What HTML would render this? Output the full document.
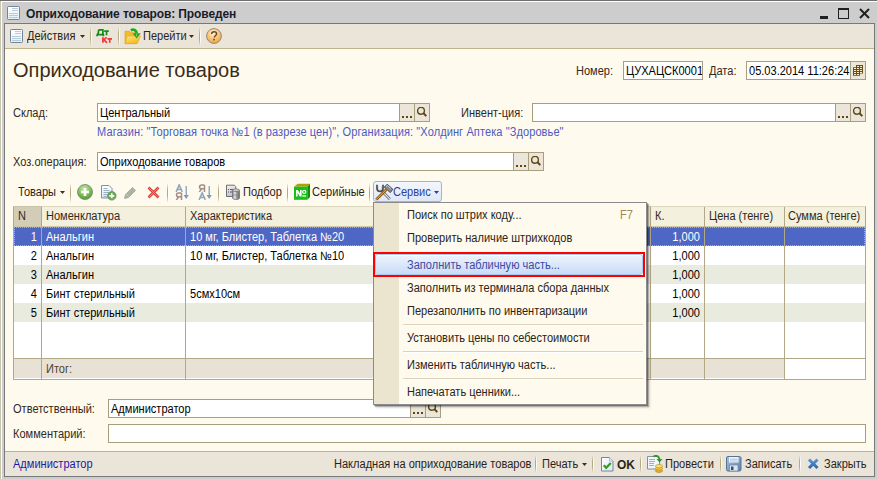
<!DOCTYPE html>
<html><head><meta charset="utf-8">
<style>
*{margin:0;padding:0;box-sizing:border-box}
html,body{width:877px;height:479px;overflow:hidden;background:#cdcdcd;font-family:"Liberation Sans",sans-serif;font-size:11px;color:#000}
.a{position:absolute}
.t{position:absolute;white-space:nowrap;line-height:13px}
</style></head><body>
<div class="a" style="left:0px;top:0px;width:877px;height:1px;background:#6f6f6f;"></div>
<div class="a" style="left:0px;top:1px;width:877px;height:1px;background:#ffffff;"></div>
<div class="a" style="left:0px;top:1px;width:1px;height:478px;background:#c9c5aa;"></div>
<div class="a" style="left:1px;top:1px;width:1px;height:478px;background:#ffffff;"></div>
<svg class="a" style="left:7px;top:6px" width="14" height="15" viewBox="0 0 14 15">
<defs><linearGradient id="di1" x1="0" y1="0" x2="0" y2="1"><stop offset="0" stop-color="#ffffff"/><stop offset="1" stop-color="#e6eef6"/></linearGradient></defs>
<rect x="0.5" y="0.5" width="12" height="13" rx="0.8" fill="url(#di1)" stroke="#718699"/>
<path d="M5 2.5h6M5 4.5h6M2 7.5h9M2 9.5h9M2 11.5h9" stroke="#b9cad8" stroke-width="1"/>
</svg>
<div class="t" style="left:26px;top:8px;font-size:12px;color:#1b1b28;font-weight:bold;letter-spacing:-0.1px;">Оприходование товаров: Проведен</div>
<div class="a" style="left:820px;top:16px;width:8px;height:3px;background:#202020;"></div>
<div class="a" style="left:838px;top:8px;width:11px;height:11px;border:1px solid #202020;border-top-width:2px;"></div>
<svg class="a" style="left:859px;top:8px" width="11" height="11" viewBox="0 0 11 11"><path d="M1 1L10 10M10 1L1 10" stroke="#202020" stroke-width="2"/></svg>
<div class="a" style="left:4px;top:23px;width:871px;height:454px;background:#fffaee;border:1px solid #787878;"></div>
<div class="a" style="left:5px;top:24px;width:869px;height:24px;background:#ebe4d8;"></div>
<div class="a" style="left:5px;top:48px;width:869px;height:1px;background:#bdb28e;"></div>
<svg class="a" style="left:10px;top:29px" width="14" height="15" viewBox="0 0 14 15">
<defs><linearGradient id="di2" x1="0" y1="0" x2="0" y2="1"><stop offset="0" stop-color="#ffffff"/><stop offset="1" stop-color="#e6eef6"/></linearGradient></defs>
<rect x="0.5" y="0.5" width="12" height="13" rx="0.8" fill="url(#di2)" stroke="#718699"/>
<path d="M5 2.5h6M5 4.5h6M2 7.5h9M2 9.5h9M2 11.5h9" stroke="#b9cad8" stroke-width="1"/>
</svg>
<div class="t" style="left:27px;top:30px;font-size:12px;transform:scaleX(0.92);transform-origin:0 0;color:#2a2418;">Действия</div>
<svg class="a" style="left:80px;top:35px" width="6" height="4"><path d="M0 0h5L2.5 3z" fill="#3a3020"/></svg>
<div class="a" style="left:90px;top:27px;width:1px;height:19px;background:linear-gradient(rgba(180,170,125,0),rgba(180,170,125,1) 35%,rgba(180,170,125,1) 65%,rgba(180,170,125,0));"></div>
<div class="a" style="left:91px;top:27px;width:1px;height:19px;background:linear-gradient(rgba(255,255,255,0),rgba(255,255,255,0.9) 35%,rgba(255,255,255,0.9) 65%,rgba(255,255,255,0));"></div>
<svg class="a" style="left:95px;top:27px" width="18" height="17" viewBox="0 0 18 17">
<g fill="none" stroke="#178a1a" stroke-width="1.7">
<path d="M3.6 2.8h4.3V7.6M3.6 2.8C3.6 5.5 3.2 6.8 2.6 7.6M1.8 7.6h7.2M2.1 7.2V9.2M8.4 7.2V9.2"/>
<path d="M9.2 4.2h4.6M11.5 4.2V8.2"/>
</g>
<g fill="none" stroke="#f03a3a" stroke-width="1.7">
<path d="M7.9 10.3V15.8M8.4 13.1L11.6 10.3M8.9 12.6L11.9 15.8"/>
<path d="M12.4 11.8h4.6M14.7 11.8V15.8"/>
</g>
</svg>
<div class="a" style="left:118px;top:27px;width:1px;height:19px;background:linear-gradient(rgba(180,170,125,0),rgba(180,170,125,1) 35%,rgba(180,170,125,1) 65%,rgba(180,170,125,0));"></div>
<div class="a" style="left:119px;top:27px;width:1px;height:19px;background:linear-gradient(rgba(255,255,255,0),rgba(255,255,255,0.9) 35%,rgba(255,255,255,0.9) 65%,rgba(255,255,255,0));"></div>
<svg class="a" style="left:124px;top:28px" width="18" height="17" viewBox="0 0 18 17">
<defs><linearGradient id="fy" x1="0" y1="0" x2="0.6" y2="1"><stop offset="0" stop-color="#fde68a"/><stop offset="1" stop-color="#f3b81e"/></linearGradient></defs>
<path d="M1 3.2H5.5L7 4.8H12V15.6H1z" fill="#f0bc2a" stroke="#e0a418" stroke-width="0.7"/>
<path d="M1.3 15.6L3 8H16.5L13.2 15.6z" fill="url(#fy)" stroke="#e6ac20" stroke-width="0.7"/>
<path d="M6.8 2.3C9.5 0.9 12.3 1.8 12.8 5.6" fill="none" stroke="#1ea81e" stroke-width="2.6"/>
<path d="M8.6 5.2H16.8L12.7 10.6z" fill="#1ea81e"/>
<path d="M12.7 5.5V8.5" stroke="#7fe07f" stroke-width="0.9"/>
</svg>
<div class="t" style="left:143px;top:30px;font-size:12px;transform:scaleX(0.92);transform-origin:0 0;color:#2a2418;">Перейти</div>
<svg class="a" style="left:189px;top:35px" width="6" height="4"><path d="M0 0h5L2.5 3z" fill="#3a3020"/></svg>
<div class="a" style="left:199px;top:27px;width:1px;height:19px;background:linear-gradient(rgba(180,170,125,0),rgba(180,170,125,1) 35%,rgba(180,170,125,1) 65%,rgba(180,170,125,0));"></div>
<div class="a" style="left:200px;top:27px;width:1px;height:19px;background:linear-gradient(rgba(255,255,255,0),rgba(255,255,255,0.9) 35%,rgba(255,255,255,0.9) 65%,rgba(255,255,255,0));"></div>
<svg class="a" style="left:206px;top:28px" width="17" height="17" viewBox="0 0 17 17">
<defs><radialGradient id="hg" cx="0.45" cy="0.3" r="0.75"><stop offset="0" stop-color="#fff3dc"/><stop offset="0.5" stop-color="#f9c77a"/><stop offset="1" stop-color="#f0a03c"/></radialGradient></defs>
<circle cx="8" cy="8" r="7.4" fill="url(#hg)" stroke="#8f8070" stroke-width="0.9"/>
<path d="M5.6 6.1c0-1.6 1.1-2.4 2.5-2.4s2.5.8 2.5 2.2c0 1.6-2.2 1.7-2.2 3.6" fill="none" stroke="#6b4a28" stroke-width="1.5"/>
<rect x="7.2" y="10.8" width="1.6" height="1.6" fill="#6b4a28"/>
</svg>
<div class="t" style="left:13px;top:64px;font-size:20px;color:#3a2c18;">Оприходование товаров</div>
<div class="t" style="left:576px;top:65px;font-size:12px;transform:scaleX(0.92);transform-origin:0 0;color:#33291a;">Номер:</div>
<div class="a" style="left:623px;top:61px;width:80px;height:19px;background:#fff;border:1px solid #a89d7c;overflow:hidden"><div class="t" style="left:2px;top:3px;color:#000;font-size:12px;transform:scaleX(0.92);transform-origin:0 0">ЦУХАЦСК0001</div></div>
<div class="t" style="left:709px;top:65px;font-size:12px;transform:scaleX(0.92);transform-origin:0 0;color:#33291a;">Дата:</div>
<div class="a" style="left:746px;top:61px;width:120px;height:19px;background:#fff;border:1px solid #a89d7c;"></div>
<div class="a" style="left:850px;top:61px;width:16px;height:19px;background:#ebe6d9;border:1px solid #a89d7c;"></div>
<div class="t" style="left:749px;top:65px;font-size:12px;transform:scaleX(0.92);transform-origin:0 0;color:#000;">05.03.2014 11:26:24</div>
<svg class="a" style="left:852px;top:64px" width="13" height="13" viewBox="0 0 13 13">
<path d="M4 1H11V9.6H8V11.8H1V3.2H4z" fill="#6e4c0e"/>
<g fill="#f6eed6">
<rect x="5" y="2" width="2" height="1"/><rect x="8" y="2" width="2" height="1"/>
<rect x="2" y="4" width="2" height="1"/><rect x="5" y="4" width="2" height="1"/><rect x="8" y="4" width="2" height="1"/>
<rect x="2" y="6" width="2" height="1"/><rect x="5" y="6" width="2" height="1"/><rect x="8" y="6" width="2" height="1"/>
<rect x="2" y="8" width="2" height="1"/><rect x="5" y="8" width="2" height="1"/><rect x="8" y="8" width="2" height="1"/>
<rect x="2" y="10" width="2" height="1"/><rect x="5" y="10" width="2" height="1"/>
</g>
</svg>
<div class="t" style="left:13px;top:107px;font-size:12px;transform:scaleX(0.92);transform-origin:0 0;color:#33291a;">Склад:</div>
<div class="a" style="left:97px;top:103px;width:333px;height:19px;background:#fff;border:1px solid #a89d7c;"></div>
<div class="a" style="left:399px;top:103px;width:16px;height:19px;background:#ebe6d9;border:1px solid #a89d7c;"></div>
<div class="a" style="left:414px;top:103px;width:16px;height:19px;background:#ebe6d9;border:1px solid #a89d7c;"></div>
<div class="a" style="left:402px;top:116px;width:2px;height:2px;background:#5e4614;"></div>
<div class="a" style="left:406px;top:116px;width:2px;height:2px;background:#5e4614;"></div>
<div class="a" style="left:410px;top:116px;width:2px;height:2px;background:#5e4614;"></div>
<svg class="a" style="left:417px;top:107px" width="11" height="11" viewBox="0 0 11 11"><circle cx="4" cy="3.8" r="3.4" fill="none" stroke="#5e4614" stroke-width="1.4"/><path d="M6.5 6.3L9.3 9.1" stroke="#5e4614" stroke-width="2"/></svg>
<div class="t" style="left:100px;top:107px;font-size:12px;transform:scaleX(0.92);transform-origin:0 0;color:#000;">Центральный</div>
<div class="t" style="left:461px;top:107px;font-size:12px;transform:scaleX(0.92);transform-origin:0 0;color:#33291a;">Инвент-ция:</div>
<div class="a" style="left:532px;top:103px;width:334px;height:19px;background:#fff;border:1px solid #a89d7c;"></div>
<div class="a" style="left:835px;top:103px;width:16px;height:19px;background:#ebe6d9;border:1px solid #a89d7c;"></div>
<div class="a" style="left:850px;top:103px;width:16px;height:19px;background:#ebe6d9;border:1px solid #a89d7c;"></div>
<div class="a" style="left:838px;top:116px;width:2px;height:2px;background:#5e4614;"></div>
<div class="a" style="left:842px;top:116px;width:2px;height:2px;background:#5e4614;"></div>
<div class="a" style="left:846px;top:116px;width:2px;height:2px;background:#5e4614;"></div>
<svg class="a" style="left:853px;top:107px" width="11" height="11" viewBox="0 0 11 11"><circle cx="4" cy="3.8" r="3.4" fill="none" stroke="#5e4614" stroke-width="1.4"/><path d="M6.5 6.3L9.3 9.1" stroke="#5e4614" stroke-width="2"/></svg>
<div class="t" style="left:97px;top:126px;font-size:12px;transform:scaleX(0.92);transform-origin:0 0;color:#4a5cc2;letter-spacing:0.09px;">Магазин: "Торговая точка №1 (в разрезе цен)", Организация: "Холдинг Аптека "Здоровье"</div>
<div class="t" style="left:13px;top:156px;font-size:12px;transform:scaleX(0.92);transform-origin:0 0;color:#33291a;">Хоз.операция:</div>
<div class="a" style="left:97px;top:152px;width:447px;height:19px;background:#fff;border:1px solid #a89d7c;"></div>
<div class="a" style="left:513px;top:152px;width:16px;height:19px;background:#ebe6d9;border:1px solid #a89d7c;"></div>
<div class="a" style="left:528px;top:152px;width:16px;height:19px;background:#ebe6d9;border:1px solid #a89d7c;"></div>
<div class="a" style="left:516px;top:165px;width:2px;height:2px;background:#5e4614;"></div>
<div class="a" style="left:520px;top:165px;width:2px;height:2px;background:#5e4614;"></div>
<div class="a" style="left:524px;top:165px;width:2px;height:2px;background:#5e4614;"></div>
<svg class="a" style="left:531px;top:156px" width="11" height="11" viewBox="0 0 11 11"><circle cx="4" cy="3.8" r="3.4" fill="none" stroke="#5e4614" stroke-width="1.4"/><path d="M6.5 6.3L9.3 9.1" stroke="#5e4614" stroke-width="2"/></svg>
<div class="t" style="left:100px;top:156px;font-size:12px;transform:scaleX(0.92);transform-origin:0 0;color:#000;">Оприходование товаров</div>
<div class="t" style="left:18px;top:186px;font-size:12px;transform:scaleX(0.92);transform-origin:0 0;color:#2a2418;">Товары</div>
<svg class="a" style="left:60px;top:191px" width="6" height="4"><path d="M0 0h5L2.5 3z" fill="#3a3020"/></svg>
<div class="a" style="left:70px;top:183px;width:1px;height:20px;background:linear-gradient(rgba(180,170,125,0),rgba(180,170,125,1) 35%,rgba(180,170,125,1) 65%,rgba(180,170,125,0));"></div>
<div class="a" style="left:71px;top:183px;width:1px;height:20px;background:linear-gradient(rgba(255,255,255,0),rgba(255,255,255,0.9) 35%,rgba(255,255,255,0.9) 65%,rgba(255,255,255,0));"></div>
<svg class="a" style="left:76px;top:183px" width="18" height="18" viewBox="0 0 18 18">
<defs><radialGradient id="gg" cx="0.45" cy="0.3" r="0.75"><stop offset="0" stop-color="#c8e8b0"/><stop offset="0.6" stop-color="#79bb52"/><stop offset="1" stop-color="#4a9030"/></radialGradient></defs>
<circle cx="9" cy="9" r="7.5" fill="url(#gg)" stroke="#7d8f78" stroke-width="0.9"/>
<path d="M9 5v8M5 9h8" stroke="#fff" stroke-width="2.6"/>
</svg>
<svg class="a" style="left:101px;top:184px" width="17" height="17" viewBox="0 0 17 17">
<defs><linearGradient id="cg" x1="0" y1="0" x2="0" y2="1"><stop offset="0" stop-color="#ffffff"/><stop offset="1" stop-color="#dfe8f2"/></linearGradient></defs>
<path d="M0.5 1.5h7.5l3 3v9.5h-10.5z" fill="url(#cg)" stroke="#7890a8"/>
<path d="M2.5 4.5h4M2.5 6.5h6M2.5 8.5h6M2.5 10.5h4M2.5 12.5h4" stroke="#9ab0c6" stroke-width="1"/>
<circle cx="10.8" cy="11.8" r="4.3" fill="#62ad48" stroke="#7a8a78" stroke-width="0.8"/>
<path d="M10.8 9.3v5M8.3 11.8h5" stroke="#fff" stroke-width="1.7"/>
</svg>
<svg class="a" style="left:123px;top:185px" width="15" height="15" viewBox="0 0 15 15">
<path d="M1.5 13.5l1-4 7-7 3 3-7 7z" fill="#aab5a2" stroke="#9aa592" stroke-width="0.8"/>
<path d="M3 9l3 3" stroke="#c8d0c0" stroke-width="0.8"/>
</svg>
<svg class="a" style="left:147px;top:186px" width="13" height="13" viewBox="0 0 13 13">
<path d="M1.5 1.5L11.5 11.5M11.5 1.5L1.5 11.5" stroke="#d8443c" stroke-width="2.8"/>
<path d="M1.5 1.5L11.5 11.5M11.5 1.5L1.5 11.5" stroke="#f58a80" stroke-width="0.9"/>
</svg>
<div class="a" style="left:167px;top:183px;width:1px;height:20px;background:linear-gradient(rgba(180,170,125,0),rgba(180,170,125,1) 35%,rgba(180,170,125,1) 65%,rgba(180,170,125,0));"></div>
<div class="a" style="left:168px;top:183px;width:1px;height:20px;background:linear-gradient(rgba(255,255,255,0),rgba(255,255,255,0.9) 35%,rgba(255,255,255,0.9) 65%,rgba(255,255,255,0));"></div>
<svg class="a" style="left:175px;top:184px" width="15" height="16" viewBox="0 0 15 16">
<g transform="translate(0.3,0.3)" fill="none" stroke="#8da4ba" stroke-width="1.5"><path d="M0.8 7.6L3.9 0.6L7 7.6M2.2 5.2h3.6"/></g>
<g transform="translate(0.3,8.3)" fill="none" stroke="#a58b8c" stroke-width="1.5"><path d="M6.2 0.8V7.6M6.2 0.8H3.4C1.8 0.8 1.2 1.6 1.2 2.6S1.8 4.4 3.4 4.4H6.2M3.6 4.4L1 7.6"/></g>
<path d="M11.2 2v10.5" stroke="#7f9ab5" stroke-width="1.2"/><path d="M8.6 11l2.6 4 2.6-4z" fill="#7f9ab5"/>
</svg>
<svg class="a" style="left:198px;top:184px" width="15" height="16" viewBox="0 0 15 16">
<g transform="translate(0.3,0.3)" fill="none" stroke="#a58b8c" stroke-width="1.5"><path d="M6.2 0.8V7.6M6.2 0.8H3.4C1.8 0.8 1.2 1.6 1.2 2.6S1.8 4.4 3.4 4.4H6.2M3.6 4.4L1 7.6"/></g>
<g transform="translate(0.3,8.3)" fill="none" stroke="#8da4ba" stroke-width="1.5"><path d="M0.8 7.6L3.9 0.6L7 7.6M2.2 5.2h3.6"/></g>
<path d="M11.2 2v10.5" stroke="#7f9ab5" stroke-width="1.2"/><path d="M8.6 11l2.6 4 2.6-4z" fill="#7f9ab5"/>
</svg>
<div class="a" style="left:218px;top:183px;width:1px;height:20px;background:linear-gradient(rgba(180,170,125,0),rgba(180,170,125,1) 35%,rgba(180,170,125,1) 65%,rgba(180,170,125,0));"></div>
<div class="a" style="left:219px;top:183px;width:1px;height:20px;background:linear-gradient(rgba(255,255,255,0),rgba(255,255,255,0.9) 35%,rgba(255,255,255,0.9) 65%,rgba(255,255,255,0));"></div>
<svg class="a" style="left:226px;top:184px" width="15" height="16" viewBox="0 0 15 16">
<defs><linearGradient id="pd" x1="0" y1="0" x2="0.3" y2="1"><stop offset="0" stop-color="#f4f4f4"/><stop offset="1" stop-color="#c4c4c4"/></linearGradient>
<linearGradient id="cy" x1="0" y1="0" x2="1" y2="0"><stop offset="0" stop-color="#8a8a8a"/><stop offset="0.35" stop-color="#e8e8e8"/><stop offset="0.6" stop-color="#9a9a9a"/><stop offset="1" stop-color="#6a6a6a"/></linearGradient></defs>
<path d="M0.5 1.2H8.3L9.8 2.7V12.5H0.5z" fill="url(#pd)" stroke="#6e6e6e"/>
<path d="M2 5.5h1M4 5.5h4M2 8h1M4 8h4" stroke="#4a50a8" stroke-width="1"/>
<path d="M6.5 6.2V14c0 .9 1.6 1.5 3.5 1.5s3.5-.6 3.5-1.5V6.2z" fill="url(#cy)" stroke="#6a6a6a" stroke-width="0.7"/>
<ellipse cx="10" cy="6.2" rx="3.5" ry="1.3" fill="#d0d0d0" stroke="#6a6a6a" stroke-width="0.7"/>
<path d="M6.6 10.2c.5.7 1.8 1 3.4 1s2.9-.3 3.4-1" fill="none" stroke="#777" stroke-width="0.6"/>
</svg>
<div class="t" style="left:243px;top:186px;font-size:12px;transform:scaleX(0.92);transform-origin:0 0;color:#2a2418;">Подбор</div>
<div class="a" style="left:287px;top:183px;width:1px;height:20px;background:linear-gradient(rgba(180,170,125,0),rgba(180,170,125,1) 35%,rgba(180,170,125,1) 65%,rgba(180,170,125,0));"></div>
<div class="a" style="left:288px;top:183px;width:1px;height:20px;background:linear-gradient(rgba(255,255,255,0),rgba(255,255,255,0.9) 35%,rgba(255,255,255,0.9) 65%,rgba(255,255,255,0));"></div>
<svg class="a" style="left:293px;top:182px" width="18" height="19" viewBox="0 0 18 19">
<path d="M1 4.8L4.6 1.8H17L14.3 4.8z" fill="#a2a512"/>
<path d="M14.3 4.8L17 1.8V15L14.3 17.8z" fill="#138a13"/>
<rect x="1" y="4.8" width="13.3" height="13" fill="#16c016"/>
<path d="M3 8H4.8L7 11.8V8H8.6V14.6H6.9L4.6 10.7V14.6H3z" fill="#fff"/>
<circle cx="11.2" cy="9.9" r="1.55" fill="none" stroke="#fff" stroke-width="1.2"/>
<rect x="9.3" y="13.3" width="3.8" height="1.3" fill="#fff"/>
</svg>
<div class="t" style="left:312px;top:186px;font-size:12px;transform:scaleX(0.92);transform-origin:0 0;color:#2a2418;">Серийные</div>
<div class="a" style="left:369px;top:183px;width:1px;height:20px;background:linear-gradient(rgba(180,170,125,0),rgba(180,170,125,1) 35%,rgba(180,170,125,1) 65%,rgba(180,170,125,0));"></div>
<div class="a" style="left:370px;top:183px;width:1px;height:20px;background:linear-gradient(rgba(255,255,255,0),rgba(255,255,255,0.9) 35%,rgba(255,255,255,0.9) 65%,rgba(255,255,255,0));"></div>
<div class="a" style="left:373px;top:181px;width:69px;height:21px;background:linear-gradient(#f3f6fd,#dfe7f8);border:1px solid #9fb4dc;border-radius:3px;"></div>
<svg class="a" style="left:374px;top:183px" width="20" height="18" viewBox="0 0 20 18">
<path d="M8.5 8.5L15.8 16.2" stroke="#5a5a5a" stroke-width="2.6"/>
<path d="M8.5 8.5L15.8 16.2" stroke="#ececec" stroke-width="1.1"/>
<path d="M3 1.8V5.2C3 7.2 4.3 8.4 6 8.4S9 7.2 9 5.2V1.8" fill="none" stroke="#4a4a4a" stroke-width="1.7"/>
<path d="M4.4 3.2V5.4C4.4 6.4 5.1 7 6 7S7.6 6.4 7.6 5.4V3.2" fill="none" stroke="#cfcfcf" stroke-width="0.8"/>
<path d="M2.2 16.6L12.2 6.8" stroke="#6e3c0c" stroke-width="2.7"/>
<path d="M2.2 16.6L12.2 6.8" stroke="#e8a030" stroke-width="1.2"/>
<path d="M10.2 4.2L13.2 1.2L18.8 6.2L16.4 9.6z" fill="#8c8c8c" stroke="#3c3c3c" stroke-width="0.9"/>
<path d="M12 3.6L13.4 2.4L17 5.6" fill="none" stroke="#d8d8d8" stroke-width="0.8"/>
</svg>
<div class="t" style="left:393px;top:186px;font-size:12px;transform:scaleX(0.92);transform-origin:0 0;color:#2c3f9c;">Сервис</div>
<svg class="a" style="left:434px;top:191px" width="6" height="4"><path d="M0 0h5L2.5 3z" fill="#2c3f9c"/></svg>
<div class="a" style="left:13px;top:206px;width:853px;height:174px;background:#fff;border:1px solid #b3a886;border-top-color:#ddd7c0;"></div>
<div class="a" style="left:14px;top:207px;width:851px;height:20px;background:#f4f0de;"></div>
<div class="a" style="left:14px;top:207px;width:27px;height:20px;background:#d3cdb8;"></div>
<div class="a" style="left:13px;top:206px;width:29px;height:1px;background:#c9c2aa;"></div>
<div class="a" style="left:14px;top:226px;width:851px;height:1px;background:#cfc6a6;"></div>
<div class="a" style="left:14px;top:227px;width:851px;height:19px;background:#4f67c4;"></div>
<div class="a" style="left:14px;top:265px;width:851px;height:19px;background:#e9ebdf;"></div>
<div class="a" style="left:14px;top:303px;width:851px;height:19px;background:#e9ebdf;"></div>
<div class="a" style="left:14px;top:358px;width:851px;height:1px;background:#b3a886;"></div>
<div class="a" style="left:14px;top:359px;width:770px;height:19px;background:#e8e2d6;"></div>
<div class="a" style="left:41px;top:207px;width:1px;height:172px;background:#b3a886;"></div>
<div class="a" style="left:185px;top:207px;width:1px;height:172px;background:#b3a886;"></div>
<div class="a" style="left:650px;top:207px;width:1px;height:172px;background:#b3a886;"></div>
<div class="a" style="left:704px;top:207px;width:1px;height:172px;background:#b3a886;"></div>
<div class="a" style="left:784px;top:207px;width:1px;height:172px;background:#b3a886;"></div>
<div class="a" style="left:14px;top:227px;width:851px;height:19px;border:1px dotted #c8b060"></div>
<div class="t" style="left:18px;top:210px;font-size:12px;transform:scaleX(0.92);transform-origin:0 0;color:#33291a;">N</div>
<div class="t" style="left:46px;top:210px;font-size:12px;transform:scaleX(0.92);transform-origin:0 0;color:#33291a;">Номенклатура</div>
<div class="t" style="left:190px;top:210px;font-size:12px;transform:scaleX(0.92);transform-origin:0 0;color:#33291a;">Характеристика</div>
<div class="t" style="left:655px;top:210px;font-size:12px;transform:scaleX(0.92);transform-origin:0 0;color:#33291a;">К.</div>
<div class="t" style="left:709px;top:210px;font-size:12px;transform:scaleX(0.92);transform-origin:0 0;color:#33291a;">Цена (тенге)</div>
<div class="t" style="left:788px;top:210px;font-size:12px;transform:scaleX(0.92);transform-origin:0 0;color:#33291a;">Сумма (тенге)</div>
<div class="t" style="left:14px;top:231px;width:23px;text-align:right;font-size:12px;transform:scaleX(0.92);transform-origin:100% 0;color:#fff;">1</div>
<div class="t" style="left:46px;top:231px;font-size:12px;transform:scaleX(0.92);transform-origin:0 0;color:#fff;">Анальгин</div>
<div class="t" style="left:190px;top:231px;font-size:12px;transform:scaleX(0.92);transform-origin:0 0;color:#fff;">10 мг, Блистер, Таблетка №20</div>
<div class="t" style="left:651px;top:231px;width:49px;text-align:right;font-size:12px;transform:scaleX(0.92);transform-origin:100% 0;color:#fff;">1,000</div>
<div class="t" style="left:14px;top:250px;width:23px;text-align:right;font-size:12px;transform:scaleX(0.92);transform-origin:100% 0;color:#000;">2</div>
<div class="t" style="left:46px;top:250px;font-size:12px;transform:scaleX(0.92);transform-origin:0 0;color:#000;">Анальгин</div>
<div class="t" style="left:190px;top:250px;font-size:12px;transform:scaleX(0.92);transform-origin:0 0;color:#000;">10 мг, Блистер, Таблетка №10</div>
<div class="t" style="left:651px;top:250px;width:49px;text-align:right;font-size:12px;transform:scaleX(0.92);transform-origin:100% 0;color:#000;">1,000</div>
<div class="t" style="left:14px;top:269px;width:23px;text-align:right;font-size:12px;transform:scaleX(0.92);transform-origin:100% 0;color:#000;">3</div>
<div class="t" style="left:46px;top:269px;font-size:12px;transform:scaleX(0.92);transform-origin:0 0;color:#000;">Анальгин</div>
<div class="t" style="left:651px;top:269px;width:49px;text-align:right;font-size:12px;transform:scaleX(0.92);transform-origin:100% 0;color:#000;">1,000</div>
<div class="t" style="left:14px;top:288px;width:23px;text-align:right;font-size:12px;transform:scaleX(0.92);transform-origin:100% 0;color:#000;">4</div>
<div class="t" style="left:46px;top:288px;font-size:12px;transform:scaleX(0.92);transform-origin:0 0;color:#000;">Бинт стерильный</div>
<div class="t" style="left:190px;top:288px;font-size:12px;transform:scaleX(0.92);transform-origin:0 0;color:#000;">5смх10см</div>
<div class="t" style="left:651px;top:288px;width:49px;text-align:right;font-size:12px;transform:scaleX(0.92);transform-origin:100% 0;color:#000;">1,000</div>
<div class="t" style="left:14px;top:307px;width:23px;text-align:right;font-size:12px;transform:scaleX(0.92);transform-origin:100% 0;color:#000;">5</div>
<div class="t" style="left:46px;top:307px;font-size:12px;transform:scaleX(0.92);transform-origin:0 0;color:#000;">Бинт стерильный</div>
<div class="t" style="left:651px;top:307px;width:49px;text-align:right;font-size:12px;transform:scaleX(0.92);transform-origin:100% 0;color:#000;">1,000</div>
<div class="t" style="left:46px;top:363px;font-size:12px;transform:scaleX(0.92);transform-origin:0 0;color:#4d4432;">Итог:</div>
<div class="t" style="left:13px;top:403px;font-size:12px;transform:scaleX(0.92);transform-origin:0 0;color:#33291a;">Ответственный:</div>
<div class="a" style="left:108px;top:399px;width:333px;height:19px;background:#fff;border:1px solid #a89d7c;"></div>
<div class="a" style="left:410px;top:399px;width:16px;height:19px;background:#ebe6d9;border:1px solid #a89d7c;"></div>
<div class="a" style="left:425px;top:399px;width:16px;height:19px;background:#ebe6d9;border:1px solid #a89d7c;"></div>
<div class="a" style="left:413px;top:412px;width:2px;height:2px;background:#5e4614;"></div>
<div class="a" style="left:417px;top:412px;width:2px;height:2px;background:#5e4614;"></div>
<div class="a" style="left:421px;top:412px;width:2px;height:2px;background:#5e4614;"></div>
<svg class="a" style="left:428px;top:403px" width="11" height="11" viewBox="0 0 11 11"><circle cx="4" cy="3.8" r="3.4" fill="none" stroke="#5e4614" stroke-width="1.4"/><path d="M6.5 6.3L9.3 9.1" stroke="#5e4614" stroke-width="2"/></svg>
<div class="t" style="left:111px;top:403px;font-size:12px;transform:scaleX(0.92);transform-origin:0 0;color:#000;">Администратор</div>
<div class="t" style="left:13px;top:428px;font-size:12px;transform:scaleX(0.92);transform-origin:0 0;color:#33291a;">Комментарий:</div>
<div class="a" style="left:108px;top:424px;width:758px;height:19px;background:#fff;border:1px solid #a89d7c;"></div>
<div class="a" style="left:5px;top:451px;width:869px;height:1px;background:#bdb28e;"></div>
<div class="a" style="left:5px;top:452px;width:869px;height:24px;background:#ebe4d8;"></div>
<div class="t" style="left:13px;top:458px;font-size:12px;transform:scaleX(0.92);transform-origin:0 0;color:#1b1ba8;">Администратор</div>
<div class="t" style="left:334px;top:458px;font-size:12px;transform:scaleX(0.92);transform-origin:0 0;color:#2a2418;">Накладная на оприходование товаров</div>
<div class="a" style="left:535px;top:455px;width:1px;height:18px;background:linear-gradient(rgba(180,170,125,0),rgba(180,170,125,1) 35%,rgba(180,170,125,1) 65%,rgba(180,170,125,0));"></div>
<div class="a" style="left:536px;top:455px;width:1px;height:18px;background:linear-gradient(rgba(255,255,255,0),rgba(255,255,255,0.9) 35%,rgba(255,255,255,0.9) 65%,rgba(255,255,255,0));"></div>
<div class="t" style="left:542px;top:458px;font-size:12px;transform:scaleX(0.92);transform-origin:0 0;color:#2a2418;">Печать</div>
<svg class="a" style="left:582px;top:463px" width="6" height="4"><path d="M0 0h5L2.5 3z" fill="#3a3020"/></svg>
<div class="a" style="left:592px;top:455px;width:1px;height:18px;background:linear-gradient(rgba(180,170,125,0),rgba(180,170,125,1) 35%,rgba(180,170,125,1) 65%,rgba(180,170,125,0));"></div>
<div class="a" style="left:593px;top:455px;width:1px;height:18px;background:linear-gradient(rgba(255,255,255,0),rgba(255,255,255,0.9) 35%,rgba(255,255,255,0.9) 65%,rgba(255,255,255,0));"></div>
<svg class="a" style="left:601px;top:457px" width="13" height="15" viewBox="0 0 13 15">
<defs><linearGradient id="dg" x1="0" y1="0" x2="1" y2="1"><stop offset="0" stop-color="#ffffff"/><stop offset="1" stop-color="#dde6f0"/></linearGradient></defs>
<path d="M0.5 0.5h8l3.5 3.5v10h-11.5z" fill="url(#dg)" stroke="#6f87a3"/>
<path d="M8.5 0.5v3.5h3.5" fill="#e8eef5" stroke="#9fb0c4" stroke-width="0.8"/>
<path d="M2.8 8.2l2.4 2.6 4.6-4.8" fill="none" stroke="#3a9a2a" stroke-width="2.3"/>
</svg>
<div class="t" style="left:617px;top:459px;font-size:12px;color:#2a2418;font-weight:bold;">OK</div>
<div class="a" style="left:640px;top:455px;width:1px;height:18px;background:linear-gradient(rgba(180,170,125,0),rgba(180,170,125,1) 35%,rgba(180,170,125,1) 65%,rgba(180,170,125,0));"></div>
<div class="a" style="left:641px;top:455px;width:1px;height:18px;background:linear-gradient(rgba(255,255,255,0),rgba(255,255,255,0.9) 35%,rgba(255,255,255,0.9) 65%,rgba(255,255,255,0));"></div>
<svg class="a" style="left:647px;top:455px" width="16" height="18" viewBox="0 0 16 18">
<path d="M0.5 1.5h10l2 2v10.5h-12z" fill="#f2f5fa" stroke="#7d8ea5"/>
<path d="M2 4.5h6M2 6.5h6M2 8.5h5M2 10.5h5" stroke="#9ab0c8" stroke-width="1"/>
<path d="M6.5 1.5c3-1.5 5.5-0.5 6 3" fill="none" stroke="#2b9a2b" stroke-width="1.8"/>
<path d="M9.5 4h6l-3 3.5z" fill="#2b9a2b"/>
<ellipse cx="12" cy="15.8" rx="3.6" ry="1.7" fill="#e3b030" stroke="#b08420" stroke-width="0.6"/>
<ellipse cx="12" cy="13.5" rx="3.6" ry="1.7" fill="#f0c848" stroke="#b08420" stroke-width="0.6"/>
<ellipse cx="12" cy="11.2" rx="3.6" ry="1.7" fill="#fae070" stroke="#b08420" stroke-width="0.6"/>
</svg>
<div class="t" style="left:665px;top:458px;font-size:12px;transform:scaleX(0.92);transform-origin:0 0;color:#2a2418;">Провести</div>
<div class="a" style="left:720px;top:455px;width:1px;height:18px;background:linear-gradient(rgba(180,170,125,0),rgba(180,170,125,1) 35%,rgba(180,170,125,1) 65%,rgba(180,170,125,0));"></div>
<div class="a" style="left:721px;top:455px;width:1px;height:18px;background:linear-gradient(rgba(255,255,255,0),rgba(255,255,255,0.9) 35%,rgba(255,255,255,0.9) 65%,rgba(255,255,255,0));"></div>
<svg class="a" style="left:726px;top:456px" width="16" height="16" viewBox="0 0 16 16">
<defs><linearGradient id="fl" x1="0" y1="0" x2="1" y2="1"><stop offset="0" stop-color="#a9c2de"/><stop offset="1" stop-color="#5d82ad"/></linearGradient></defs>
<rect x="0.5" y="0.5" width="14.5" height="14.5" rx="1.5" fill="url(#fl)" stroke="#58739a"/>
<rect x="3" y="1" width="9.5" height="5.5" fill="#eef3f9"/>
<path d="M4 3.2h7.5M4 5h7.5" stroke="#9fb5cf" stroke-width="0.8"/>
<rect x="3.5" y="9" width="8.5" height="6" fill="#dfe5ec" stroke="#6e86a5" stroke-width="0.7"/>
<rect x="5" y="10.5" width="2.5" height="3.5" fill="#3d4f66"/>
</svg>
<div class="t" style="left:745px;top:458px;font-size:12px;transform:scaleX(0.92);transform-origin:0 0;color:#2a2418;">Записать</div>
<div class="a" style="left:799px;top:455px;width:1px;height:18px;background:linear-gradient(rgba(180,170,125,0),rgba(180,170,125,1) 35%,rgba(180,170,125,1) 65%,rgba(180,170,125,0));"></div>
<div class="a" style="left:800px;top:455px;width:1px;height:18px;background:linear-gradient(rgba(255,255,255,0),rgba(255,255,255,0.9) 35%,rgba(255,255,255,0.9) 65%,rgba(255,255,255,0));"></div>
<svg class="a" style="left:807px;top:458px" width="12" height="12" viewBox="0 0 12 12">
<defs><linearGradient id="xg" x1="0" y1="0" x2="0" y2="1"><stop offset="0" stop-color="#5b95d6"/><stop offset="1" stop-color="#2c66b2"/></linearGradient></defs>
<path d="M2 1.5L10.5 10M10.5 1.5L2 10" stroke="url(#xg)" stroke-width="3"/>
</svg>
<div class="t" style="left:824px;top:458px;font-size:12px;transform:scaleX(0.92);transform-origin:0 0;color:#2a2418;">Закрыть</div>
<div class="a" style="left:373px;top:202px;width:274px;height:203px;background:#fffaee;border:1px solid #8a8a8a;box-shadow:inset -1px -1px 0 #fff, 1px 1px 0 rgba(0,0,0,0.32), 2px 2px 1px rgba(0,0,0,0.22), 3px 3px 2px rgba(0,0,0,0.12);"></div>
<div class="a" style="left:374px;top:203px;width:25px;height:201px;background:#ebe5cf;"></div>
<div class="a" style="left:403px;top:324px;width:240px;height:1px;background:#d9d2bd;"></div>
<div class="a" style="left:403px;top:325px;width:240px;height:1px;background:#ffffff;"></div>
<div class="a" style="left:403px;top:351px;width:240px;height:1px;background:#d9d2bd;"></div>
<div class="a" style="left:403px;top:352px;width:240px;height:1px;background:#ffffff;"></div>
<div class="a" style="left:403px;top:378px;width:240px;height:1px;background:#d9d2bd;"></div>
<div class="a" style="left:403px;top:379px;width:240px;height:1px;background:#ffffff;"></div>
<div class="a" style="left:375px;top:254px;width:268px;height:21px;background:linear-gradient(#edf3fd,#cadcf6);border:1px solid #acc8ee;border-radius:3px;box-shadow:inset 0 1px 0 #fff;"></div>
<div class="a" style="left:373px;top:252px;width:272px;height:25px;border:2px solid #ff0000;"></div>
<div class="t" style="left:407px;top:209px;font-size:12px;transform:scaleX(0.92);transform-origin:0 0;color:#2a2418;">Поиск по штрих коду...</div>
<div class="t" style="left:407px;top:232px;font-size:12px;transform:scaleX(0.92);transform-origin:0 0;color:#2a2418;">Проверить наличие штрихкодов</div>
<div class="t" style="left:407px;top:259px;font-size:12px;transform:scaleX(0.92);transform-origin:0 0;color:#3b4aa8;">Заполнить табличную часть...</div>
<div class="t" style="left:407px;top:282px;font-size:12px;transform:scaleX(0.92);transform-origin:0 0;color:#2a2418;">Заполнить из терминала сбора данных</div>
<div class="t" style="left:407px;top:305px;font-size:12px;transform:scaleX(0.92);transform-origin:0 0;color:#2a2418;">Перезаполнить по инвентаризации</div>
<div class="t" style="left:407px;top:332px;font-size:12px;transform:scaleX(0.92);transform-origin:0 0;color:#2a2418;">Установить цены по себестоимости</div>
<div class="t" style="left:407px;top:359px;font-size:12px;transform:scaleX(0.92);transform-origin:0 0;color:#2a2418;">Изменить табличную часть...</div>
<div class="t" style="left:407px;top:386px;font-size:12px;transform:scaleX(0.92);transform-origin:0 0;color:#2a2418;">Напечатать ценники...</div>
<div class="t" style="left:620px;top:209px;font-size:12px;transform:scaleX(0.92);transform-origin:0 0;color:#a4894e;">F7</div>
</body></html>
